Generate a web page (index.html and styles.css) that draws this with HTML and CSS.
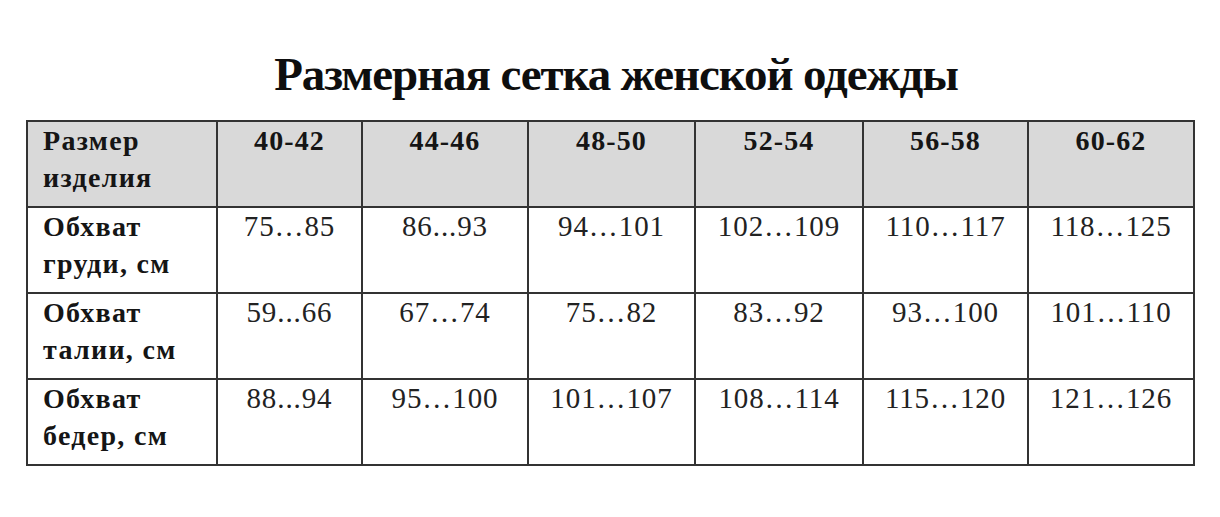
FILE: index.html
```html
<!DOCTYPE html>
<html lang="ru">
<head>
<meta charset="utf-8">
<title>Размерная сетка женской одежды</title>
<link rel="stylesheet" href="styles.css">
</head>
<body>
<main class="page">
  <h1 class="title">Размерная сетка женской одежды</h1>
  <table class="grid">
    <colgroup>
      <col class="c-label">
      <col class="c-narrow">
      <col class="c-w1">
      <col class="c-w2">
      <col class="c-w3">
      <col class="c-w4">
      <col class="c-w5">
    </colgroup>
    <thead>
      <tr class="head-row">
        <th class="label">Размер<br>изделия</th>
        <th>40-42</th>
        <th>44-46</th>
        <th>48-50</th>
        <th>52-54</th>
        <th>56-58</th>
        <th>60-62</th>
      </tr>
    </thead>
    <tbody>
      <tr>
        <th class="label">Обхват<br>груди, см</th>
        <td>75…85</td>
        <td>86...93</td>
        <td>94…101</td>
        <td>102…109</td>
        <td>110…117</td>
        <td>118…125</td>
      </tr>
      <tr>
        <th class="label">Обхват<br>талии, см</th>
        <td>59...66</td>
        <td>67…74</td>
        <td>75…82</td>
        <td>83…92</td>
        <td>93…100</td>
        <td>101…110</td>
      </tr>
      <tr>
        <th class="label">Обхват<br>бедер, см</th>
        <td>88...94</td>
        <td>95…100</td>
        <td>101…107</td>
        <td>108…114</td>
        <td>115…120</td>
        <td>121…126</td>
      </tr>
    </tbody>
  </table>
</main>
</body>
</html>
```

FILE: styles.css
```css
html, body {
  margin: 0;
  padding: 0;
  background: #ffffff;
}

.page {
  width: 1220px;
  height: 517px;
  padding-top: 46px;
  box-sizing: border-box;
  font-family: "Liberation Serif", "Times New Roman", serif;
  color: #151515;
}

.title {
  margin: 0;
  padding-left: 12px;
  font-size: 47px;
  line-height: 56px;
  letter-spacing: -1.1px;
  font-weight: bold;
  text-align: center;
  color: #0e0e0e;
}

.grid {
  margin: 18px 0 0 26px;
  width: 1167px;
  border-collapse: collapse;
  table-layout: fixed;
}

.c-label { width: 190px; }
.c-narrow { width: 145px; }
.c-w1 { width: 166px; }
.c-w2 { width: 167px; }
.c-w3 { width: 168px; }
.c-w4 { width: 165px; }
.c-w5 { width: 166px; }

.grid th,
.grid td {
  border: 2px solid #333333;
  height: 86px;
  padding: 0;
  vertical-align: top;
  box-sizing: border-box;
}

.grid th {
  font-size: 28px;
  line-height: 37px;
  letter-spacing: 1.1px;
  font-weight: bold;
  text-align: center;
  color: #151515;
}

.grid th.label {
  text-align: left;
  padding-left: 15px;
  letter-spacing: 1.3px;
}

.grid td {
  font-size: 29px;
  line-height: 36px;
  letter-spacing: 0.9px;
  text-align: center;
  color: #222222;
}

.head-row th {
  background: #d9d9d9;
}
```
